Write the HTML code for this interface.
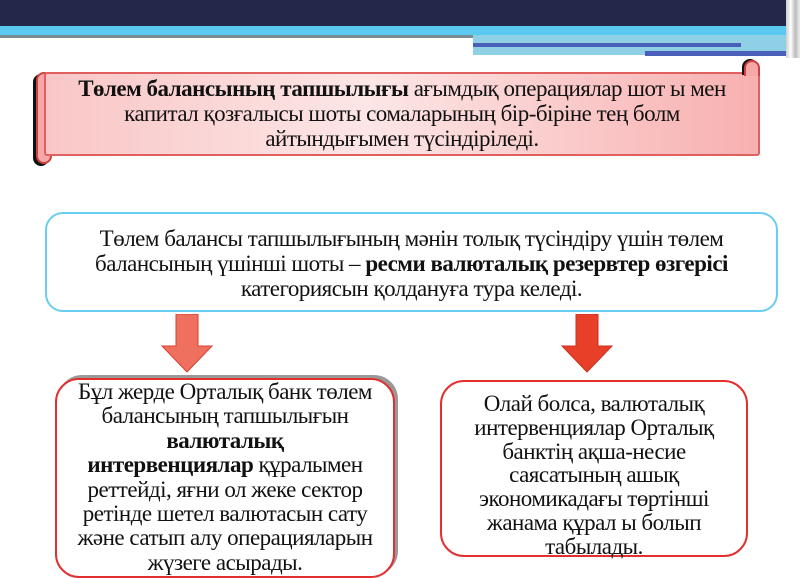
<!DOCTYPE html>
<html><head><meta charset="utf-8"><style>
*{margin:0;padding:0;box-sizing:border-box}
body{width:800px;height:574px;overflow:hidden;background:#fff;position:relative;font-family:"Liberation Serif",serif;color:#111}
.a{position:absolute}
.t{position:absolute;text-align:center;font-size:23px;line-height:25px;letter-spacing:-0.5px}
b{font-weight:bold}
</style></head><body>
<div class="a" style="left:0;top:0;width:800px;height:26px;background:#23284a"></div>
<div class="a" style="left:0;top:26px;width:800px;height:9px;background:#5ac9f0"></div>
<div class="a" style="left:0;top:35px;width:473px;height:3px;background:#7a8a92"></div>
<div class="a" style="left:473px;top:35px;width:313px;height:20px;background:#8fd0e6"></div>
<div class="a" style="left:473px;top:43px;width:268px;height:4px;background:#4a5fb8"></div>
<div class="a" style="left:645px;top:51px;width:141px;height:5px;background:#4a5fb8"></div>
<div class="a" style="left:786px;top:0;width:14px;height:58px;background:linear-gradient(90deg,#ccc,#fff,#bbb,#eee)"></div>

<!-- scroll -->
<div class="a" style="left:36px;top:72px;width:16px;height:92px;border-radius:8px;background:#f6a8a8;border:2px solid #d04040;box-shadow:-3px 2px 0 #111"></div>
<div class="a" style="left:44px;top:72px;width:716px;height:84px;background:linear-gradient(90deg,#f9c6c6,#fde6e6 45%,#f8b0b0);border:2px solid #e06060;border-radius:3px"></div>
<div class="a" style="left:744px;top:60px;width:16px;height:16px;border-radius:8px 8px 0 0;background:#f6a8a8;border:2px solid #d04040;border-bottom:none;box-shadow:-2px -1px 0 #111"></div>
<div class="t" style="left:42px;top:76px;width:720px">
<b>Төлем балансының тапшылығы</b> ағымдық операциялар шот ы мен<br>капитал қозғалысы шоты сомаларының бір-біріне тең болм<br>айтындығымен түсіндіріледі.</div>

<!-- blue box -->
<div class="a" style="left:45px;top:212px;width:733px;height:100px;border:2px solid #6acdf0;border-radius:18px;background:#fff"></div>
<div class="t" style="left:45px;top:226px;width:733px">Төлем балансы тапшылығының мәнін толық түсіндіру үшін төлем<br>балансының үшінші шоты – <b>ресми валюталық резервтер өзгерісі</b><br>категориясын қолдануға тура келеді.</div>

<!-- arrows -->
<svg class="a" style="left:160px;top:314px" width="56" height="60"><path d="M16 0H38V32H52L27 58L2 32H16Z" fill="#f07060" stroke="#d84030"/></svg>
<svg class="a" style="left:560px;top:314px" width="56" height="60"><path d="M16 0H38V32H52L27 58L2 32H16Z" fill="#e84028" stroke="#c83020"/></svg>

<!-- left box -->
<div class="a" style="left:55px;top:378px;width:340px;height:200px;border:2px solid #e23030;border-radius:24px;background:#fff;box-shadow:3px -3px 0 #999"></div>
<div class="t" style="left:50px;top:380px;width:350px;line-height:24.4px">Бұл жерде Орталық банк төлем<br>балансының тапшылығын<br><b>валюталық</b><br><b>интервенциялар</b> құралымен<br>реттейді, яғни ол жеке сектор<br>ретінде шетел валютасын сату<br>және сатып алу операцияларын<br>жүзеге асырады.</div>

<!-- right box -->
<div class="a" style="left:440px;top:380px;width:308px;height:177px;border:2px solid #e23030;border-radius:24px;background:#fff"></div>
<div class="t" style="left:440px;top:392px;width:308px;line-height:23.8px">Олай болса, валюталық<br>интервенциялар Орталық<br>банктің ақша-несие<br>саясатының ашық<br>экономикадағы төртінші<br>жанама құрал ы болып<br>табылады.</div>
</body></html>
